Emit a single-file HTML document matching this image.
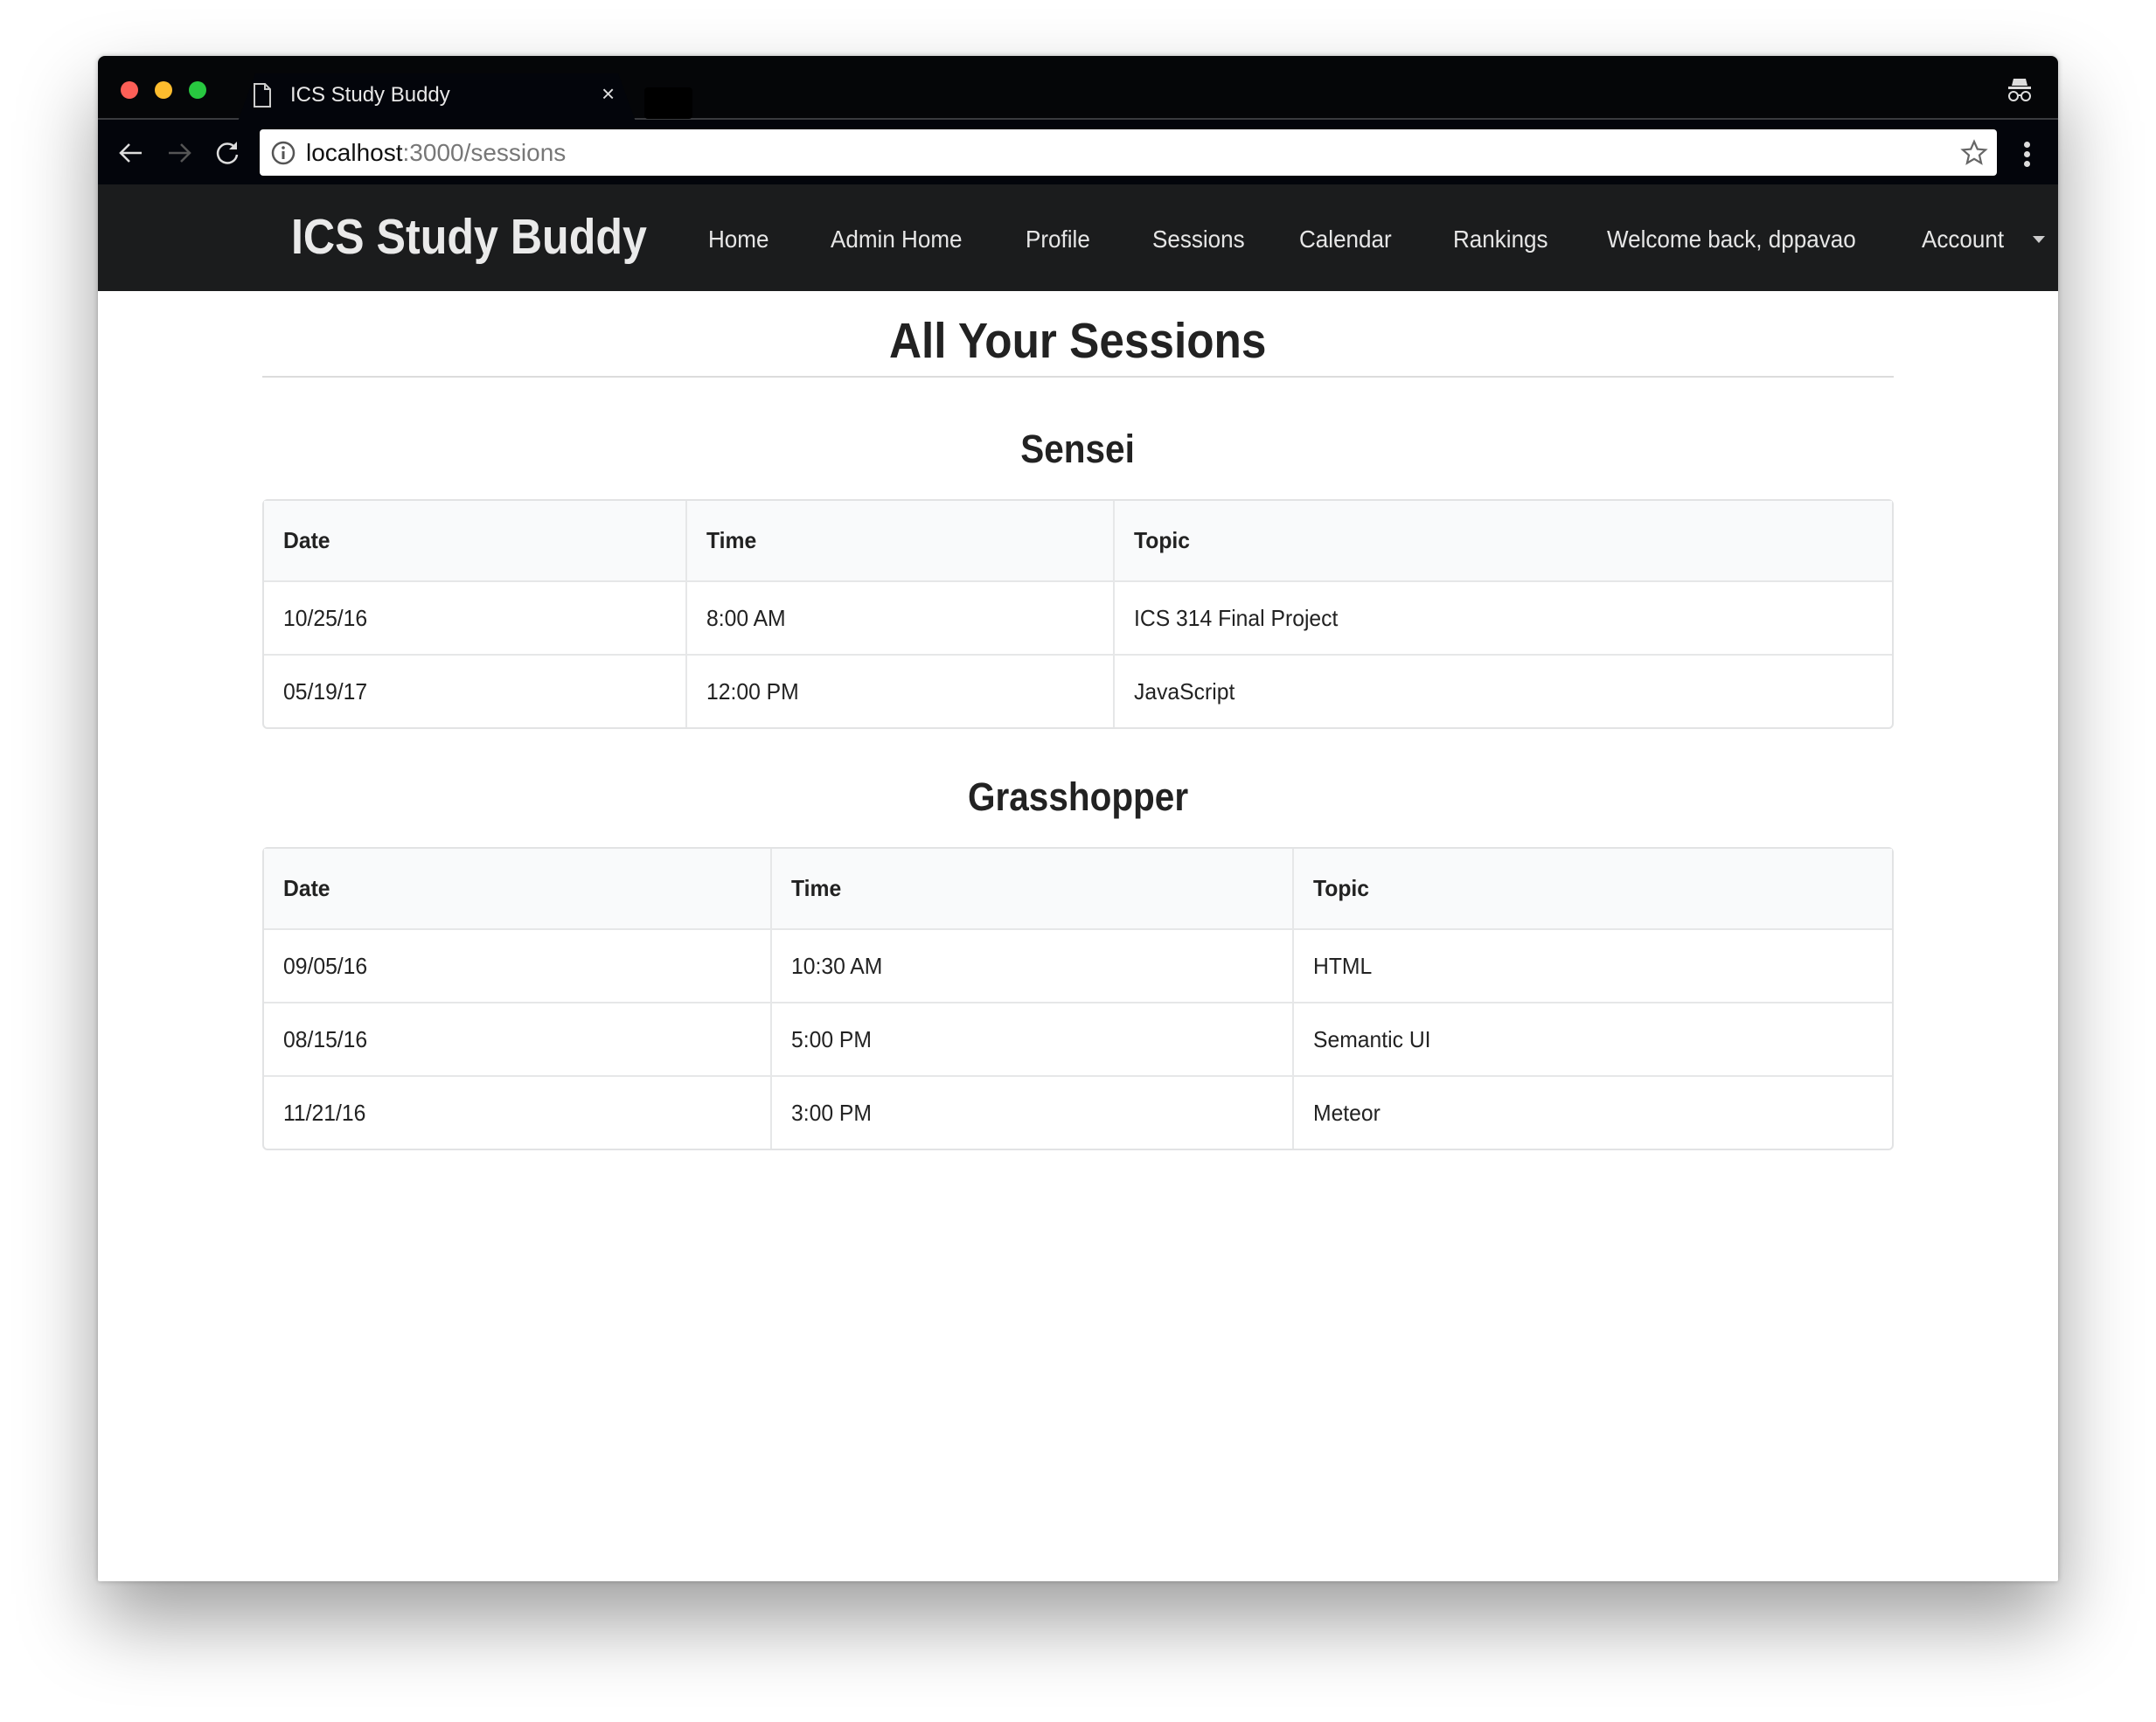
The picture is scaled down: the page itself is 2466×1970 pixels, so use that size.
<!DOCTYPE html>
<html><head><meta charset="utf-8"><style>
*{margin:0;padding:0;box-sizing:border-box}
body{width:2466px;height:1970px;background:#fff;position:relative;overflow:hidden;font-family:"Liberation Sans",sans-serif}
.win{position:absolute;left:112px;top:64px;width:2242px;height:1745px;background:#fff;border-radius:8px 8px 2px 2px;box-shadow:0 45px 90px rgba(0,0,0,.38),0 0 6px rgba(0,0,0,.25);overflow:hidden}
.abs{position:absolute}
.tbar{left:0;top:0;width:2242px;height:73px;background:#050608;border-bottom:2px solid #3a3b3e}
.dot{width:20px;height:20px;border-radius:50%;top:29px}
.tab{left:160px;top:20px;width:455px;height:55px;background:#03050b;clip-path:polygon(20px 0,435px 0,455px 55px,0 55px)}
.tool{left:0;top:73px;width:2242px;height:74px;background:#03050b}
.url{left:185px;top:84px;width:1987px;height:53px;background:#fff;border-radius:4px}
.nav{left:0;top:147px;width:2242px;height:122px;background:#1b1c1d}
.nv{color:#e6e6e6;font-size:28px;top:46px;white-space:nowrap;display:inline-block;transform-origin:left center}
.t{color:#222;white-space:nowrap}
.c{display:inline-block;transform:scaleX(.9)}
table{position:absolute;left:188px;border-collapse:separate;border-spacing:0;border:2px solid #e2e3e4;border-radius:6px;width:1866px;font-size:26px;color:#222}
td,th{text-align:left;padding:0 0 0 22px;border-top:2px solid #e6e7e8;border-left:2px solid #e6e7e8}
td span,th span{display:inline-block;transform:scaleX(.95);transform-origin:left center}
th{background:#f9fafb;font-weight:bold;border-top:none;height:91px}
td{height:84px}
tr td:first-child,tr th:first-child{border-left:none}
</style></head><body>
<div class="win">
  <div class="abs tbar"></div>
  <div class="abs dot" style="left:26px;background:#fc5f57"></div>
  <div class="abs dot" style="left:65px;background:#fdbc2e"></div>
  <div class="abs dot" style="left:104px;background:#28c840"></div>
  <div class="abs tab"></div>
  <svg class="abs" style="left:177px;top:30px" width="22" height="30" viewBox="0 0 22 30"><path d="M2 2h12l6 6v20H2z M14 2v6h6" fill="none" stroke="#ccc" stroke-width="2"/></svg>
  <div class="abs" style="left:220px;top:31px;color:#e8e8e8;font-size:24px">ICS Study Buddy</div>
  <div class="abs" style="left:576px;top:28px;color:#ddd;font-size:26px">×</div>
  <div class="abs" style="left:625px;top:36px;width:55px;height:36px;background:#000;border-radius:4px"></div>
  <svg class="abs" style="left:2182px;top:24px" width="32" height="32" viewBox="0 0 32 32"><path d="M9 2h14l2 8H7z" fill="#ddd"/><rect x="3" y="11" width="26" height="3" fill="#ddd"/><circle cx="9" cy="22" r="5" fill="none" stroke="#ddd" stroke-width="2"/><circle cx="23" cy="22" r="5" fill="none" stroke="#ddd" stroke-width="2"/><path d="M14 21h4" stroke="#ddd" stroke-width="2"/></svg>
  <div class="abs tool"></div>
  <svg class="abs" style="left:22px;top:96px" width="32" height="30" viewBox="0 0 32 30"><path d="M28 15H5M14 5L4 15l10 10" fill="none" stroke="#ddd" stroke-width="2.5"/></svg>
  <svg class="abs" style="left:77px;top:96px" width="32" height="30" viewBox="0 0 32 30"><path d="M4 15h23M18 5l10 10-10 10" fill="none" stroke="#555" stroke-width="2.5"/></svg>
  <svg class="abs" style="left:132px;top:95px" width="32" height="32" viewBox="0 0 32 32"><path d="M25 10A11 11 0 1 0 27 18" fill="none" stroke="#ddd" stroke-width="2.5"/><path d="M27 3v9h-9z" fill="#ddd"/></svg>
  <div class="abs url"></div>
  <svg class="abs" style="left:197px;top:96px" width="30" height="30" viewBox="0 0 30 30"><circle cx="15" cy="15" r="12" fill="none" stroke="#555" stroke-width="2.5"/><rect x="13.5" y="13" width="3" height="9" fill="#555"/><circle cx="15" cy="9" r="1.8" fill="#555"/></svg>
  <div class="abs" style="left:238px;top:95px;font-size:28px;color:#111">localhost<span style="color:#777">:3000/sessions</span></div>
  <svg class="abs" style="left:2130px;top:95px" width="32" height="32" viewBox="0 0 32 32"><path d="M16 3l3.8 8.6 9.2.8-7 6.1 2.1 9.1L16 22.8l-8.1 4.8L10 18.5 3 12.4l9.2-.8z" fill="none" stroke="#666" stroke-width="2.2"/></svg>
  <div class="abs" style="left:2203px;top:98px;width:7px;height:7px;border-radius:50%;background:#ddd;box-shadow:0 11px 0 #ddd,0 22px 0 #ddd"></div>
  <div class="abs nav"></div>
  <div class="abs" style="left:221px;top:174px;color:#eaeaea;font-size:57px;font-weight:bold;white-space:nowrap;transform:scaleX(.88);transform-origin:left center">ICS Study Buddy</div>
  <div class="abs nv" style="left:698px;top:194px;transform:scaleX(.93)">Home</div>
  <div class="abs nv" style="left:838px;top:194px;transform:scaleX(.93)">Admin Home</div>
  <div class="abs nv" style="left:1061px;top:194px;transform:scaleX(.93)">Profile</div>
  <div class="abs nv" style="left:1206px;top:194px;transform:scaleX(.93)">Sessions</div>
  <div class="abs nv" style="left:1374px;top:194px;transform:scaleX(.93)">Calendar</div>
  <div class="abs nv" style="left:1550px;top:194px;transform:scaleX(.93)">Rankings</div>
  <div class="abs nv" style="left:1726px;top:194px;transform:scaleX(.93)">Welcome back, dppavao</div>
  <div class="abs nv" style="left:2086px;top:194px;transform:scaleX(.93)">Account</div>
  <div class="abs" style="left:2213px;top:206px;width:0;height:0;border-left:7px solid transparent;border-right:7px solid transparent;border-top:8px solid #ccc"></div>

  <div class="abs t" style="left:0;width:2242px;text-align:center;top:293px;font-size:57px;font-weight:bold"><span class="c">All Your Sessions</span></div>
  <div class="abs" style="left:188px;top:366px;width:1866px;height:2px;background:#dcdcdc"></div>
  <div class="abs t" style="left:0;width:2242px;text-align:center;top:424px;font-size:45px;font-weight:bold"><span class="c">Sensei</span></div>
  <table style="top:507px">
    <tr><th style="width:482px"><span>Date</span></th><th style="width:489px"><span>Time</span></th><th><span>Topic</span></th></tr>
    <tr><td><span>10/25/16</span></td><td><span>8:00 AM</span></td><td><span>ICS 314 Final Project</span></td></tr>
    <tr><td><span>05/19/17</span></td><td><span>12:00 PM</span></td><td><span>JavaScript</span></td></tr>
  </table>
  <div class="abs t" style="left:0;width:2242px;text-align:center;top:822px;font-size:45px;font-weight:bold"><span class="c">Grasshopper</span></div>
  <table style="top:905px">
    <tr><th style="width:579px"><span>Date</span></th><th style="width:597px"><span>Time</span></th><th><span>Topic</span></th></tr>
    <tr><td><span>09/05/16</span></td><td><span>10:30 AM</span></td><td><span>HTML</span></td></tr>
    <tr><td><span>08/15/16</span></td><td><span>5:00 PM</span></td><td><span>Semantic UI</span></td></tr>
    <tr><td><span>11/21/16</span></td><td><span>3:00 PM</span></td><td><span>Meteor</span></td></tr>
  </table>
</div>
</body></html>
